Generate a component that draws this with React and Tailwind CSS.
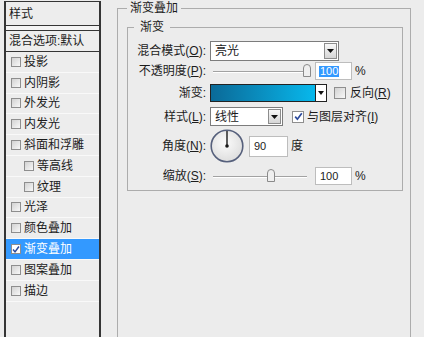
const font = "font-['Liberation_Sans','Noto_Sans_CJK_SC',sans-serif]";

const items = [
  { t: "投影" },
  { t: "内阴影" },
  { t: "外发光" },
  { t: "内发光" },
  { t: "斜面和浮雕" },
  { t: "等高线", indent: true },
  { t: "纹理", indent: true },
  { t: "光泽" },
  { t: "颜色叠加" },
  { t: "渐变叠加", checked: true, selected: true },
  { t: "图案叠加" },
  { t: "描边" },
];

function Box({ checked, size = "w-[10px] h-[10px]" }) {
  return (
    <span
      className={`${size} shrink-0 border border-[#8e8e8e] flex items-center justify-center ${
        checked ? "bg-white" : "bg-linear-to-br from-[#d2d2d2] to-[#f8f8f8]"
      }`}
    >
      {checked && (
        <svg width="9" height="9" viewBox="0 0 9 9">
          <path d="M1.2 4.6 L3.4 7.2 L7.8 1.2" stroke="#2c4a9c" strokeWidth="1.7" fill="none" />
        </svg>
      )}
    </span>
  );
}

function Arrow({ className = "" }) {
  return (
    <span className={`flex items-center justify-center border border-[#8c8c8c] bg-linear-to-b from-[#f8f8f8] to-[#d6d6d6] ${className}`}>
      <svg width="7" height="4" viewBox="0 0 7 4">
        <path d="M0 0H7L3.5 4Z" fill="#111" />
      </svg>
    </span>
  );
}

function Key({ k }) {
  return (
    <>
      (<span className="underline underline-offset-1">{k}</span>)
    </>
  );
}

function Label({ children }) {
  return <div className="w-[78px] shrink-0 text-right whitespace-nowrap">{children}</div>;
}

function Slider({ pos }) {
  return (
    <div className="relative w-[98px] h-full">
      <div className="absolute left-0 right-[4px] top-1/2 h-[2px] border-t border-[#a2a2a2] border-b border-b-white" />
      <svg className="absolute top-[2px]" style={{ left: pos }} width="8" height="13" viewBox="0 0 8 13">
        <path d="M0.5 12.5 V4 Q0.5 0.5 4 0.5 Q7.5 0.5 7.5 4 V12.5 Z" fill="#efefef" stroke="#8a8a8a" />
      </svg>
    </div>
  );
}

function LeftPanel() {
  return (
    <div className="ml-[4px] mt-[1px] w-[97px] h-[340px] shrink-0 border-x-2 border-t border-[#353535] flex flex-col bg-[#ededed]">
      <div className="h-[24px] pl-[3px] flex items-center border-b border-[#353535]">样式</div>
      <div className="h-[4px] bg-[#f4f4f4]" />
      <div className="h-[22px] pl-[3px] flex items-center border-y border-[#353535] whitespace-nowrap">混合选项:默认</div>
      {items.map((it) => (
        <div key={it.t} className="h-[20.8px] border-b border-[#f9f9f9] flex">
          <div
            className={`flex-1 flex items-center ${it.indent ? "pl-[18px]" : "pl-[5px]"} ${
              it.selected ? "bg-[#3399ff] text-white" : ""
            }`}
          >
            <Box checked={it.checked} />
            <span className="ml-[3px] whitespace-nowrap">{it.t}</span>
          </div>
        </div>
      ))}
    </div>
  );
}

export default function App() {
  return (
    <div className={`w-[424px] h-[337px] overflow-hidden bg-[#ececec] flex text-[12px] text-[#1c1c1c] ${font}`}>
      <LeftPanel />
      <div className="ml-[16px] shrink-0">
        <fieldset className="w-[294px] h-[360px] border border-[#acacac]">
          <legend className="ml-[9px] px-[3px] leading-[16px]">渐变叠加</legend>
          <fieldset className="ml-[9px] mt-[3px] w-[276px] border border-[#acacac] pb-[5px]">
            <legend className="ml-[6px] px-[6px] leading-[16px]">渐变</legend>

            <div className="mt-[6px] h-[20px] flex items-center">
              <Label>
                混合模式<Key k="O" />:
              </Label>
              <div className="ml-[4px] w-[129px] h-[20px] border border-[#7c7c7c] bg-white flex items-center justify-between pl-[4px] pr-[1px]">
                <span>亮光</span>
                <Arrow className="w-[13px] h-[16px]" />
              </div>
            </div>

            <div className="mt-[1px] h-[18px] flex items-center">
              <Label>
                不透明度<Key k="P" />:
              </Label>
              <div className="ml-[7px] h-full">
                <Slider pos={90} />
              </div>
              <div className="ml-[4px] w-[37px] h-[18px] border border-[#bdbdbd] bg-white flex items-center pl-[3px] text-[11px]">
                <span className="bg-[#3399ff] text-white leading-[11px] px-[1px]">100</span>
              </div>
              <span className="ml-[3px]">%</span>
            </div>

            <div className="mt-[4px] h-[18px] flex items-center">
              <Label>渐变:</Label>
              <div className="ml-[4px] w-[117px] h-[18px] border border-[#222] flex bg-white">
                <div className="flex-1 bg-linear-to-r from-[#0a6a98] to-[#07b8ec]" />
                <div className="w-[11px] border-l border-[#222] flex items-center justify-center">
                  <svg width="6" height="4" viewBox="0 0 6 4">
                    <path d="M0 0H6L3 4Z" fill="#111" />
                  </svg>
                </div>
              </div>
              <span className="ml-[7px]">
                <Box size="w-[12px] h-[12px]" />
              </span>
              <span className="ml-[4px] whitespace-nowrap">
                反向<Key k="R" />
              </span>
            </div>

            <div className="mt-[5px] h-[19px] flex items-center">
              <Label>
                样式<Key k="L" />:
              </Label>
              <div className="ml-[4px] w-[73px] h-[19px] border border-[#7c7c7c] bg-white flex items-center justify-between pl-[4px] pr-[1px]">
                <span>线性</span>
                <Arrow className="w-[13px] h-[15px]" />
              </div>
              <span className="ml-[9px]">
                <Box checked size="w-[12px] h-[12px]" />
              </span>
              <span className="ml-[3px] whitespace-nowrap">
                与图层对齐<Key k="I" />
              </span>
            </div>

            <div className="mt-[3px] h-[34px] flex items-center">
              <Label>
                角度<Key k="N" />:
              </Label>
              <svg className="ml-[4px] shrink-0" width="34" height="34" viewBox="0 0 34 34">
                <defs>
                  <radialGradient id="dial" cx="45%" cy="40%" r="60%">
                    <stop offset="0%" stopColor="#fbfbfb" />
                    <stop offset="100%" stopColor="#dedede" />
                  </radialGradient>
                </defs>
                <circle cx="17" cy="17" r="15.8" fill="url(#dial)" stroke="#56607c" strokeWidth="1.6" />
                <line x1="17" y1="17" x2="17" y2="2" stroke="#1a1a1a" strokeWidth="1.4" />
                <circle cx="17" cy="17" r="1.8" fill="#1a1a1a" />
              </svg>
              <div className="ml-[5px] w-[39px] h-[21px] border border-[#bdbdbd] bg-white flex items-center pl-[4px] text-[11px]">
                90
              </div>
              <span className="ml-[3px]">度</span>
            </div>

            <div className="mt-[4px] h-[18px] flex items-center">
              <Label>
                缩放<Key k="S" />:
              </Label>
              <div className="ml-[7px] h-full">
                <Slider pos={54} />
              </div>
              <div className="ml-[4px] w-[37px] h-[18px] border border-[#bdbdbd] bg-white flex items-center pl-[4px] text-[11px]">
                100
              </div>
              <span className="ml-[3px]">%</span>
            </div>
          </fieldset>
        </fieldset>
      </div>
    </div>
  );
}
